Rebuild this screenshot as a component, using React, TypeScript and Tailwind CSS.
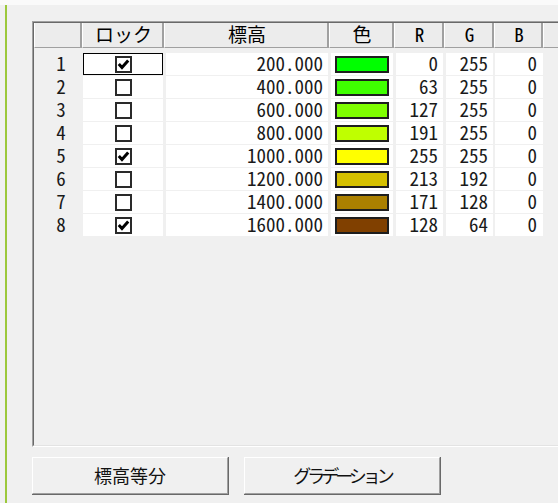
import React from "react";

type Row = { lock: boolean; height: string; r: number; g: number; b: number };

const rows: Row[] = [
    { lock: true, height: "200.000", r: 0, g: 255, b: 0 },
    { lock: false, height: "400.000", r: 63, g: 255, b: 0 },
    { lock: false, height: "600.000", r: 127, g: 255, b: 0 },
    { lock: false, height: "800.000", r: 191, g: 255, b: 0 },
    { lock: true, height: "1000.000", r: 255, g: 255, b: 0 },
    { lock: false, height: "1200.000", r: 213, g: 192, b: 0 },
    { lock: false, height: "1400.000", r: 171, g: 128, b: 0 },
    { lock: true, height: "1600.000", r: 128, g: 64, b: 0 },
];

const gridFont = "font-['Noto_Sans_Mono_CJK_JP','Noto_Sans_CJK_JP','Liberation_Mono',monospace]";

function HeaderCell({ w, label }: { w: string; label?: string }) {
    return (
        <div className={`${w} shrink-0 h-full flex items-center justify-center pb-[3px] pl-[2px] border-l border-l-white border-r-2 border-r-[#a0a0a0] border-b border-b-[#a0a0a0] bg-[#ececec] text-[19px] leading-none text-black`}>
            {label}
        </div>
    );
}

function Check({ checked }: { checked: boolean }) {
    return (
        <div className="w-[17px] h-[17px] border-2 border-[#2a2a2a] bg-white flex items-center justify-center">
            {checked && (
                <svg width="13" height="13" viewBox="0 0 13 13">
                    <path d="M1.8 6 L5 9.6 L11.2 2.6" fill="none" stroke="#000" strokeWidth="3" />
                </svg>
            )}
        </div>
    );
}

function GridRow({ row, index }: { row: Row; index: number }) {
    const focused = index === 0;
    return (
        <div className="flex h-[22px] mb-px text-[19px] leading-none text-[#1a1a1a]">
            <div className="w-[48px] shrink-0 flex items-center justify-center pl-[6px] pb-[4px]">{index + 1}</div>
            <div className="w-[82px] shrink-0 pl-px pr-px">
                <div className={`h-full bg-white flex items-center justify-center ${focused ? "border border-black" : ""}`}>
                    <Check checked={row.lock} />
                </div>
            </div>
            <div className="w-[165px] shrink-0 pl-[2px] pr-px">
                <div className="h-full bg-white flex items-center justify-end pr-[5px] pb-[4px]">{row.height}</div>
            </div>
            <div className="w-[65px] shrink-0 pl-[2px] pr-px">
                <div className="h-full bg-white flex items-center pl-[4px]">
                    <div
                        className="w-[54px] h-[17px] border-2 border-[#1e1e1e]"
                        style={{ backgroundColor: `rgb(${row.r},${row.g},${row.b})` }}
                    />
                </div>
            </div>
            <div className="w-[50px] shrink-0 pl-[2px] pr-px">
                <div className="h-full bg-white flex items-center justify-end pr-[5px] pb-[4px]">{row.r}</div>
            </div>
            <div className="w-[50px] shrink-0 pl-[2px] pr-px">
                <div className="h-full bg-white flex items-center justify-end pr-[5px] pb-[4px]">{row.g}</div>
            </div>
            <div className="w-[49px] shrink-0 pl-px">
                <div className="h-full bg-white flex items-center justify-end pr-[6px] pb-[4px]">{row.b}</div>
            </div>
        </div>
    );
}

function Button({ children, extra = "" }: { children: React.ReactNode; extra?: string }) {
    return (
        <div className="shrink-0 border-r border-b border-[#696969]">
            <div className="h-[37px] w-[196px] border-t border-l border-t-white border-l-white border-r border-b border-r-[#a0a0a0] border-b-[#a0a0a0] bg-[#f0f0f0] flex items-center justify-center font-['Noto_Sans_CJK_JP',sans-serif] text-[18px] text-[#111]">
                <span className={extra}>{children}</span>
            </div>
        </div>
    );
}

export default function App() {
    return (
        <div className="w-[558px] h-[503px] overflow-hidden bg-[#f0f0f0] flex flex-col">
            <div className="h-[5px] shrink-0 bg-[#fafafa]" />
            <div className="flex flex-1 min-w-0">
                <div className="w-[5px] shrink-0" />
                <div className="w-[2px] shrink-0 bg-[#9cc83c]" />
                <div className="shrink-0 pl-[25px] pt-[16px]">
                    {/* string grid */}
                    <div className={`w-[560px] h-[426px] border-t border-l border-[#a0a0a0] border-b border-b-white ${gridFont}`}>
                        <div className="h-full border-t border-l border-[#696969] border-b border-b-[#e3e3e3]">
                            <div className="flex h-[25px]">
                                <HeaderCell w="w-[48px]" />
                                <HeaderCell w="w-[82px]" label="ロック" />
                                <HeaderCell w="w-[165px]" label="標高" />
                                <HeaderCell w="w-[65px]" label="色" />
                                <HeaderCell w="w-[50px]" label="R" />
                                <HeaderCell w="w-[50px]" label="G" />
                                <HeaderCell w="w-[49px]" label="B" />
                                <div className="flex-1 h-full border-l border-l-white border-b border-b-[#a0a0a0] bg-[#ececec]" />
                            </div>
                            <div className="pt-[5px]">
                                {rows.map((row, i) => (
                                    <GridRow key={i} row={row} index={i} />
                                ))}
                            </div>
                        </div>
                    </div>
                    {/* buttons */}
                    <div className="flex gap-[15px] mt-[10px]">
                        <Button>標高等分</Button>
                        <Button extra="tracking-[-4px]">グラデーション</Button>
                    </div>
                </div>
            </div>
        </div>
    );
}
